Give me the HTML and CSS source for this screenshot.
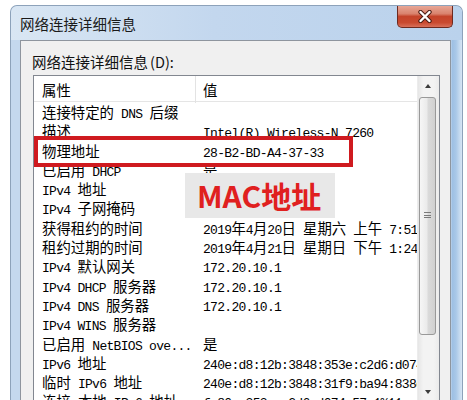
FILE: index.html
```html
<!DOCTYPE html>
<html lang="zh-CN">
<head>
<meta charset="utf-8">
<title>网络连接详细信息</title>
<link rel="stylesheet" href="styles.css">
</head>
<body>
<div class="window">
  <div class="titlebar">
    <div class="title">网络连接详细信息</div>
    <div class="close">
      <svg width="16" height="13" viewBox="0 0 16 13">
        <path d="M3.5 2 L12.5 11 M12.5 2 L3.5 11" stroke="#4a1c14" stroke-width="4.4" stroke-linecap="round" fill="none"/>
        <path d="M3.5 2 L12.5 11 M12.5 2 L3.5 11" stroke="#ffffff" stroke-width="2.4" stroke-linecap="round" fill="none"/>
      </svg>
    </div>
  </div>
  <div class="content">
    <div class="label">网络连接详细信息<span class="lm">(D):</span></div>
    <div class="listbox">
      <div class="lv">
        <div class="hdr"><div class="c1">属性</div><div class="c2">值</div></div>
        <div class="row"><div class="p">连接特定的<span class="m"> DNS </span>后缀</div><div class="v"></div></div>
        <div class="row"><div class="p">描述</div><div class="v"><span class="m">Intel(R) Wireless-N 7260</span></div></div>
        <div class="row"><div class="p">物理地址</div><div class="v"><span class="m">28-B2-BD-A4-37-33</span></div></div>
        <div class="row"><div class="p">已启用<span class="m"> DHCP</span></div><div class="v">是</div></div>
        <div class="row"><div class="p"><span class="m">IPv4 </span>地址</div><div class="v"></div></div>
        <div class="row"><div class="p"><span class="m">IPv4 </span>子网掩码</div><div class="v"></div></div>
        <div class="row"><div class="p">获得租约的时间</div><div class="v"><span class="m">2019</span>年<span class="m">4</span>月<span class="m">20</span>日<span class="m"> </span>星期六<span class="m"> </span>上午<span class="m"> 7:51:10</span></div></div>
        <div class="row"><div class="p">租约过期的时间</div><div class="v"><span class="m">2019</span>年<span class="m">4</span>月<span class="m">21</span>日<span class="m"> </span>星期日<span class="m"> </span>下午<span class="m"> 1:24:09</span></div></div>
        <div class="row"><div class="p"><span class="m">IPv4 </span>默认网关</div><div class="v"><span class="m">172.20.10.1</span></div></div>
        <div class="row"><div class="p"><span class="m">IPv4 DHCP </span>服务器</div><div class="v"><span class="m">172.20.10.1</span></div></div>
        <div class="row"><div class="p"><span class="m">IPv4 DNS </span>服务器</div><div class="v"><span class="m">172.20.10.1</span></div></div>
        <div class="row"><div class="p"><span class="m">IPv4 WINS </span>服务器</div><div class="v"></div></div>
        <div class="row"><div class="p">已启用<span class="m"> NetBIOS ove...</span></div><div class="v">是</div></div>
        <div class="row"><div class="p"><span class="m">IPv6 </span>地址</div><div class="v"><span class="m">240e:d8:12b:3848:353e:c2d6:d074:57e1</span></div></div>
        <div class="row"><div class="p">临时<span class="m"> IPv6 </span>地址</div><div class="v"><span class="m">240e:d8:12b:3848:31f9:ba94:838e:1d2f</span></div></div>
        <div class="row"><div class="p">连接<span class="m">-</span>本地<span class="m"> IPv6 </span>地址</div><div class="v"><span class="m">fe80::353e:c2d6:d074:57e1%11</span></div></div>
      </div>
      <div class="sb">
        <div class="sbtn up"><span class="tri-up"></span></div>
        <div class="thumb"><span class="grip"></span></div>
        <div class="track"></div>
        <div class="sbtn down"><span class="tri-down"></span></div>
      </div>
    </div>
  </div>
</div>
<div class="redbox"></div>
<div class="maclabel">MAC地址</div>
</body>
</html>
```

FILE: styles.css
```css
html, body {
  margin: 0;
  padding: 0;
  background: #ffffff;
  height: 400px;
  overflow: hidden;
  font-family: "Noto Sans CJK SC", "Liberation Sans", sans-serif;
}

.window {
  margin: 5px 0 0 10px;
  width: 453px;
  height: 395px;
  box-sizing: border-box;
  border: 1px solid #8da2ba;
  border-bottom: none;
  border-radius: 7px 7px 0 0;
  padding: 0 11px 0 9px;
  background:
    linear-gradient(to right, rgba(255,255,255,0) 0, rgba(255,255,255,0) 440px, #9dbfe3 441px, #a9c8e8 445px, #d8e6f4 451px);
  background-color: #c4d8ee;
  overflow: hidden;
}

.titlebar {
  height: 34px;
  display: flex;
  align-items: center;
  justify-content: space-between;
  background: linear-gradient(to right, #d9e6f3, #c3d7ee 45%, #bad2ec);
  margin: 0 -11px 0 -9px;
  padding: 0 11px 0 9px;
  border-radius: 6px 6px 0 0;
}

.title {
  font-size: 14.5px;
  color: #1a1a1a;
  line-height: 20px;
  margin-top: 2px;
}

.close {
  align-self: flex-start;
  margin: -1px -2px 0 0;
  width: 56px;
  height: 23px;
  box-sizing: border-box;
  border: 1px solid #6d2a20;
  border-top: none;
  border-radius: 0 0 5px 5px;
  background: linear-gradient(#e9ab9b 0%, #d9826d 40%, #c4432a 52%, #c94a30 80%, #d8705a 100%);
  display: flex;
  align-items: center;
  justify-content: center;
}

.close svg {
  display: block;
}

.content {
  height: 360px;
  box-sizing: border-box;
  background: #f0f0f0;
  border: 1px solid #8e959e;
  border-bottom: none;
  padding: 11px 10px 0 12px;
}

.label {
  font-size: 14.5px;
  line-height: 20px;
  height: 20px;
  color: #111;
  margin-left: -1px;
}

.label .lm {
  font-size: 14.5px;
  margin-left: 2px;
}

.listbox {
  margin-top: 3px;
  width: 407px;
  height: 325px;
  box-sizing: border-box;
  border: 1px solid #828790;
  border-bottom: none;
  background: #ffffff;
  display: grid;
  grid-template-columns: 383px 22px;
}

.lv {
  overflow: hidden;
}

.hdr {
  display: grid;
  grid-template-columns: 162px 1fr;
  height: 25px;
  border-bottom: 1px solid #e5e5e5;
  font-size: 14.4px;
  line-height: 27px;
  color: #000;
}

.hdr .c1 {
  padding-left: 8px;
  border-right: 1px solid #e3e3e3;
  box-sizing: border-box;
}

.hdr .c2 {
  padding-left: 7px;
}

.row {
  display: grid;
  grid-template-columns: 162px 221px;
  height: 19.3px;
  line-height: 19.3px;
  white-space: nowrap;
  font-size: 14.4px;
  color: #000;
}

.row .p {
  padding-left: 8px;
  overflow: hidden;
}

.row .v {
  padding-left: 7px;
  overflow: hidden;
}

.m {
  font-family: "Liberation Mono", "DejaVu Sans Mono", monospace;
  font-size: 13px;
  letter-spacing: -0.7px;
}

.sb {
  display: flex;
  flex-direction: column;
  background: linear-gradient(to right, #e6e6e6, #f3f3f3 25%, #f3f3f3 75%, #ebebeb);
  border-left: 1px solid #ececec;
  box-sizing: border-box;
}

.sbtn {
  flex: none;
  display: flex;
  align-items: center;
  justify-content: center;
}

.up {
  height: 20px;
}

.down {
  height: 17px;
}

.tri-up {
  width: 0;
  height: 0;
  border-left: 3.5px solid transparent;
  border-right: 3.5px solid transparent;
  border-bottom: 4px solid #3c3c3c;
  margin-right: 2px;
}

.tri-down {
  width: 0;
  height: 0;
  border-left: 3.5px solid transparent;
  border-right: 3.5px solid transparent;
  border-top: 4px solid #3c3c3c;
  margin-right: 2px;
}

.thumb {
  flex: none;
  height: 238px;
  margin: 1px 3px 0 1px;
  box-sizing: border-box;
  border: 1px solid #999999;
  border-radius: 3px;
  background: linear-gradient(to right, #f6f6f6, #ebebeb 45%, #dadada 55%, #d0d0d0);
  display: flex;
  align-items: center;
  justify-content: center;
}

.grip {
  width: 7px;
  height: 8px;
  background: repeating-linear-gradient(#7a7a7a 0, #7a7a7a 1px, transparent 1px, transparent 2.5px);
}

.track {
  flex: 1;
}

.redbox {
  position: absolute;
  left: 34px;
  top: 136px;
  width: 319px;
  height: 31px;
  box-sizing: border-box;
  border: 4px solid #cf1a1f;
}

.maclabel {
  position: absolute;
  left: 185px;
  top: 173px;
  width: 150px;
  height: 45px;
  box-sizing: border-box;
  padding-left: 12px;
  background: #e8e8e8;
  color: #e0201f;
  font-family: "Noto Sans CJK SC", "Liberation Sans", sans-serif;
  font-weight: bold;
  font-size: 30px;
  line-height: 45px;
  white-space: nowrap;
}
```
